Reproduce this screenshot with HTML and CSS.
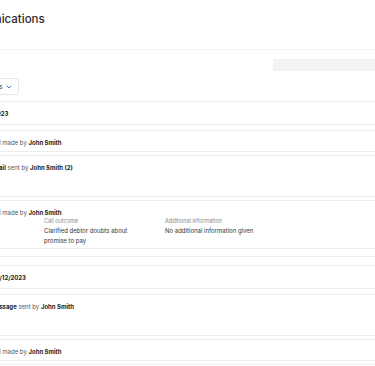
FILE: index.html
```html
<!DOCTYPE html>
<html lang="en">

<head>
    <meta charset="UTF-8">
    <meta name="viewport" content="width=device-width, initial-scale=1">
    <title>Communications</title>
    <link rel="stylesheet" href="styles.css">
</head>

<body>
    <div class="page">

        <div class="header">
            <h1 class="title">Communications</h1>
        </div>

        <div class="search-row">
            <div class="search"></div>
        </div>

        <div class="filter-row">
            <button class="filter-btn">Filters
                <svg width="6" height="4" viewBox="0 0 6 4">
                    <path d="M0.7 0.7 L3 3 L5.3 0.7" fill="none" stroke="#5a6fd6" stroke-width="1"/>
                </svg>
            </button>
        </div>

        <!-- first group -->
        <div class="group">
            <div class="group-head">2023</div>

            <div class="item">
                <div class="item-title">Call made by <b>John Smith</b></div>
            </div>

            <div class="item tall">
                <div class="item-title"><b>Email</b> sent by <b>John Smith (2)</b></div>
            </div>

            <div class="item">
                <div class="item-title">Call made by <b>John Smith</b></div>
                <div class="details">
                    <div class="field">
                        <div class="label">Call direction</div>
                        <div class="value">Outbound</div>
                    </div>
                    <div class="field">
                        <div class="label">Call outcome</div>
                        <div class="value">Clarified debtor doubts about promise to pay</div>
                    </div>
                    <div class="field">
                        <div class="label">Additional information</div>
                        <div class="value">No additional information given</div>
                    </div>
                </div>
            </div>
        </div>

        <!-- second group -->
        <div class="group">
            <div class="group-head">13/12/2023</div>

            <div class="item tall">
                <div class="item-title"><b>Message</b> sent by <b>John Smith</b></div>
            </div>

            <div class="item">
                <div class="item-title">Call made by <b>John Smith</b></div>
            </div>

            <div class="item">
                <div class="item-title">Call made by <b>John Smith</b></div>
            </div>
        </div>

    </div>
</body>

</html>
```

FILE: styles.css
```css
html {
    font-family: Inter, "Liberation Sans", sans-serif;
    color: #333;
}

body {
    margin: 0;
    overflow: hidden;
}

/* page is wider than the window, left part sits off screen */
.page {
    margin-left: -80px;
    width: 500px;
}

.header {
    height: 50px;
    box-sizing: border-box;
    border-bottom: 1px solid #f2f2f2;
    padding: 11px 0 0 32px;
}

.title {
    margin: 0;
    font-size: 11.5px;
    line-height: 16px;
    font-weight: 500;
    color: #2a2a2a;
}

.search-row {
    padding-top: 9px;
}

.search {
    margin-left: 353px;
    width: 140px;
    height: 12px;
    background-color: #f3f3f3;
}

.filter-row {
    display: flex;
    padding: 7px 0 0 58px;
}

.filter-btn {
    display: flex;
    align-items: center;
    gap: 4px;
    height: 17px;
    padding: 0 6px;
    border: 1px solid #e6e6e6;
    border-radius: 3px;
    background: #fff;
    font-family: inherit;
    font-size: 6px;
    color: #333;
}

.group {
    margin-top: 6px;
    border-top: 1px solid #ececec;
    border-bottom: 1px solid #ececec;
    padding-bottom: 7px;
}

.group + .group {
    margin-top: 8px;
}

.group-head {
    height: 22px;
    line-height: 23px;
    padding-left: 73px;
    border-bottom: 1px solid #ececec;
    font-size: 6px;
    font-weight: 700;
    color: #222;
    margin-bottom: 5px;
}

.item {
    border-top: 1px solid #ececec;
    border-bottom: 1px solid #ececec;
    padding: 6px 0 4px 3px;
}

.item + .item {
    margin-top: 3px;
}

.item.tall {
    padding-bottom: 24px;
}

.item-title {
    padding-left: 67px;
    font-size: 6px;
    line-height: 11px;
    margin-bottom: -1px;
    color: #555;
}

.item-title b {
    color: #222;
}

.details {
    display: grid;
    grid-template-columns: 121px 121px 1fr;
    padding-bottom: 2px;
    margin-bottom: -4px;
}

.label {
    font-size: 5.5px;
    line-height: 9px;
    color: #8a8a8a;
}

.value {
    font-size: 6px;
    line-height: 10px;
    color: #333;
    max-width: 100px;
}
```
